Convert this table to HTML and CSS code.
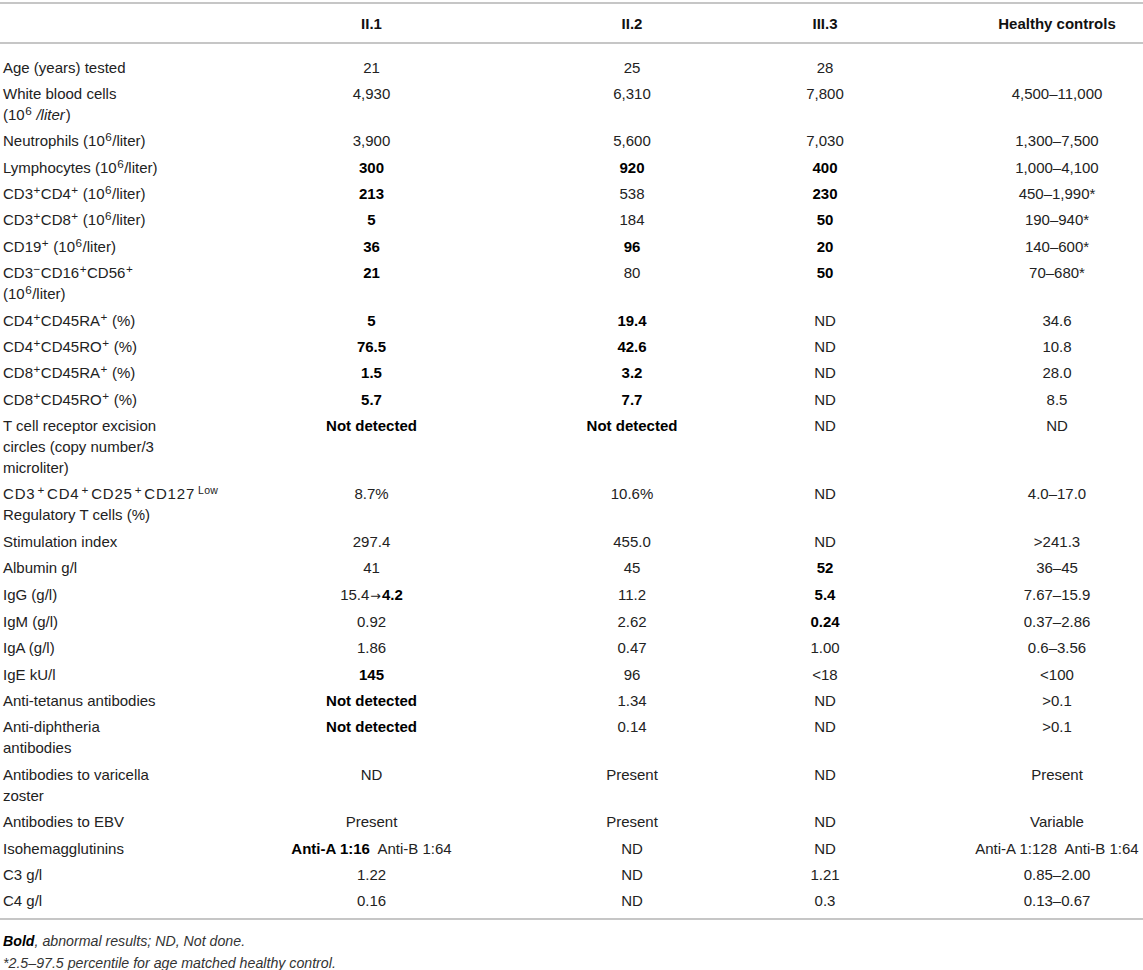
FILE: index.html
```html
<!DOCTYPE html>
<html lang="en">
<head>
<meta charset="utf-8">
<title>Immunological findings</title>
<link rel="stylesheet" href="styles.css">
</head>
<body>
<div class="page">
<table class="data">
  <colgroup>
    <col class="c-label">
    <col class="c-a">
    <col class="c-b">
    <col class="c-c">
    <col class="c-d">
  </colgroup>
  <thead>
    <tr>
      <th></th>
      <th>II.1</th>
      <th>II.2</th>
      <th>III.3</th>
      <th>Healthy controls</th>
    </tr>
  </thead>
  <tbody>
    <tr><td>Age (years) tested</td><td>21</td><td>25</td><td>28</td><td></td></tr>
    <tr><td>White blood cells <span class="nowrap">(10<sup>6</sup> <i>/liter</i>)</span></td><td>4,930</td><td>6,310</td><td>7,800</td><td>4,500–11,000</td></tr>
    <tr><td>Neutrophils (10<sup>6</sup>/liter)</td><td>3,900</td><td>5,600</td><td>7,030</td><td>1,300–7,500</td></tr>
    <tr><td>Lymphocytes (10<sup>6</sup>/liter)</td><td><b>300</b></td><td><b>920</b></td><td><b>400</b></td><td>1,000–4,100</td></tr>
    <tr><td>CD3<sup>+</sup>CD4<sup>+</sup> (10<sup>6</sup>/liter)</td><td><b>213</b></td><td>538</td><td><b>230</b></td><td>450–1,990*</td></tr>
    <tr><td>CD3<sup>+</sup>CD8<sup>+</sup> (10<sup>6</sup>/liter)</td><td><b>5</b></td><td>184</td><td><b>50</b></td><td>190–940*</td></tr>
    <tr><td>CD19<sup>+</sup> (10<sup>6</sup>/liter)</td><td><b>36</b></td><td><b>96</b></td><td><b>20</b></td><td>140–600*</td></tr>
    <tr><td>CD3<sup>−</sup>CD16<sup>+</sup>CD56<sup>+</sup> (10<sup>6</sup>/liter)</td><td><b>21</b></td><td>80</td><td><b>50</b></td><td>70–680*</td></tr>
    <tr><td>CD4<sup>+</sup>CD45RA<sup>+</sup> (%)</td><td><b>5</b></td><td><b>19.4</b></td><td>ND</td><td>34.6</td></tr>
    <tr><td>CD4<sup>+</sup>CD45RO<sup>+</sup> (%)</td><td><b>76.5</b></td><td><b>42.6</b></td><td>ND</td><td>10.8</td></tr>
    <tr><td>CD8<sup>+</sup>CD45RA<sup>+</sup> (%)</td><td><b>1.5</b></td><td><b>3.2</b></td><td>ND</td><td>28.0</td></tr>
    <tr><td>CD8<sup>+</sup>CD45RO<sup>+</sup> (%)</td><td><b>5.7</b></td><td><b>7.7</b></td><td>ND</td><td>8.5</td></tr>
    <tr><td>T cell receptor excision circles (copy number/3 microliter)</td><td><b>Not detected</b></td><td><b>Not detected</b></td><td>ND</td><td>ND</td></tr>
    <tr><td><span class="nowrap wide">CD3<sup>+</sup>CD4<sup>+</sup>CD25<sup>+</sup>CD127<sup class="low">Low</sup></span> Regulatory T cells (%)</td><td>8.7%</td><td>10.6%</td><td>ND</td><td>4.0–17.0</td></tr>
    <tr><td>Stimulation index</td><td>297.4</td><td>455.0</td><td>ND</td><td>&gt;241.3</td></tr>
    <tr><td>Albumin g/l</td><td>41</td><td>45</td><td><b>52</b></td><td>36–45</td></tr>
    <tr><td>IgG (g/l)</td><td>15.4<span class="arrow">→</span><b>4.2</b></td><td>11.2</td><td><b>5.4</b></td><td>7.67–15.9</td></tr>
    <tr><td>IgM (g/l)</td><td>0.92</td><td>2.62</td><td><b>0.24</b></td><td>0.37–2.86</td></tr>
    <tr><td>IgA (g/l)</td><td>1.86</td><td>0.47</td><td>1.00</td><td>0.6–3.56</td></tr>
    <tr><td>IgE kU/l</td><td><b>145</b></td><td>96</td><td>&lt;18</td><td>&lt;100</td></tr>
    <tr><td>Anti-tetanus antibodies</td><td><b>Not detected</b></td><td>1.34</td><td>ND</td><td>&gt;0.1</td></tr>
    <tr><td>Anti-diphtheria antibodies</td><td><b>Not detected</b></td><td>0.14</td><td>ND</td><td>&gt;0.1</td></tr>
    <tr><td>Antibodies to varicella zoster</td><td>ND</td><td>Present</td><td>ND</td><td>Present</td></tr>
    <tr><td>Antibodies to EBV</td><td>Present</td><td>Present</td><td>ND</td><td>Variable</td></tr>
    <tr><td>Isohemagglutinins</td><td><b>Anti-A 1:16</b>&nbsp; Anti-B 1:64</td><td>ND</td><td>ND</td><td>Anti-A 1:128&nbsp; Anti-B 1:64</td></tr>
    <tr><td>C3 g/l</td><td>1.22</td><td>ND</td><td>1.21</td><td>0.85–2.00</td></tr>
    <tr><td>C4 g/l</td><td>0.16</td><td>ND</td><td>0.3</td><td>0.13–0.67</td></tr>
  </tbody>
</table>
<div class="notes">
  <p><b>Bold</b>, abnormal results; ND, Not done.</p>
  <p>*2.5–97.5 percentile for age matched healthy control.</p>
</div>
</div>
</body>
</html>
```

FILE: styles.css
```css
html, body {
  margin: 0;
  padding: 0;
  background: #ffffff;
  overflow: hidden;
}

body {
  font-family: "Liberation Sans", Arial, sans-serif;
  font-size: 15px;
  color: #222222;
}

.page {
  width: 1143px;
}

.data {
  width: 1143px;
  table-layout: fixed;
  border-collapse: collapse;
  margin-top: 2px;
}

.c-label { width: 260px; }
.c-a { width: 241px; }
.c-b { width: 227px; }
.c-c { width: 213px; }
.c-d { width: 202px; }

.data th,
.data td {
  line-height: 21px;
  padding: 2.7px 0;
  text-align: center;
  vertical-align: top;
  white-space: nowrap;
}

.data th {
  font-weight: bold;
  color: #111111;
  padding-top: 8.5px;
  padding-bottom: 8.5px;
  border-top: 2px solid #c6c6c6;
  border-bottom: 2px solid #c6c6c6;
}

.data th:nth-child(1),
.data td:nth-child(1) {
  text-align: left;
  padding-left: 3px;
  padding-right: 97px;
  white-space: normal;
  overflow: visible;
}

.data th:nth-child(2),
.data td:nth-child(2) {
  padding-right: 18px;
}

.data th:nth-child(3),
.data td:nth-child(3) {
  padding-left: 35px;
}

.data th:nth-child(4),
.data td:nth-child(4) {
  padding-right: 19px;
}

.data th:nth-child(5),
.data td:nth-child(5) {
  padding-left: 30px;
}

.data tbody tr:first-child td {
  padding-top: 12.5px;
}

.data tbody tr:last-child td {
  padding-bottom: 6.5px;
  border-bottom: 2px solid #c6c6c6;
}

.data b {
  color: #000000;
}

.data i {
  padding-right: 1px;
}

.nowrap {
  white-space: nowrap;
}

.wide {
  letter-spacing: 0.8px;
}

.wide sup {
  padding: 0 2px;
}

sup {
  font-size: 0.78em;
  line-height: 0;
  vertical-align: 0.42em;
  padding: 0 0.5px;
}

.wide sup.low {
  font-size: 0.7em;
  vertical-align: 0.5em;
  letter-spacing: 0.3px;
  padding: 0 0 0 3px;
}

.arrow {
  font-family: "DejaVu Sans", sans-serif;
  font-size: 0.85em;
  padding: 0 1px;
}

.notes {
  margin-top: 10px;
  padding-left: 3px;
  font-size: 14.2px;
  font-style: italic;
  color: #333333;
}

.notes p {
  margin: 0;
  line-height: 22px;
}

.notes b {
  color: #000000;
}
```
